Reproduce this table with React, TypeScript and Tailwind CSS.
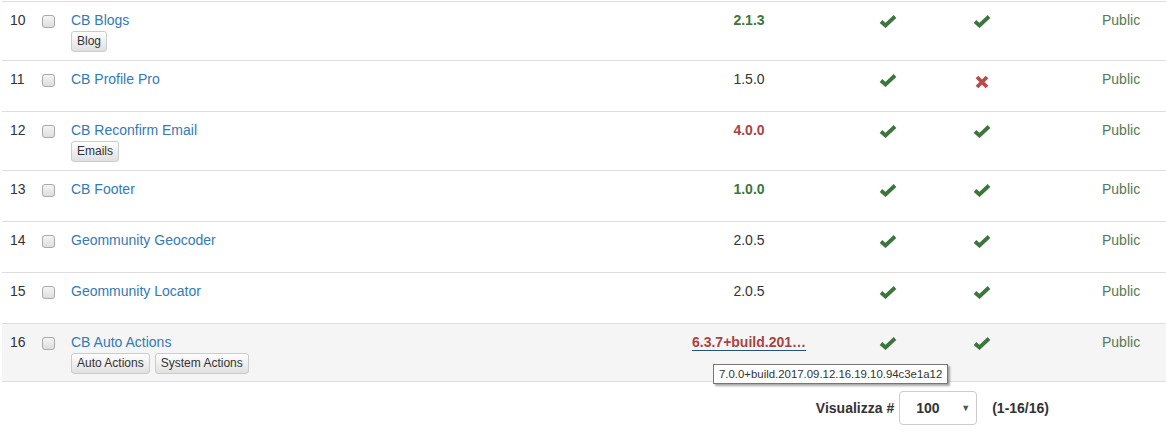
import React from "react";

type Row = {
  id: number;
  name: string;
  tags: string[];
  version: string;
  versionStyle: "plain" | "ok" | "old" | "link";
  a: boolean;
  b: boolean;
  hover?: boolean;
};

const rows: Row[] = [
  { id: 10, name: "CB Blogs", tags: ["Blog"], version: "2.1.3", versionStyle: "ok", a: true, b: true },
  { id: 11, name: "CB Profile Pro", tags: [], version: "1.5.0", versionStyle: "plain", a: true, b: false },
  { id: 12, name: "CB Reconfirm Email", tags: ["Emails"], version: "4.0.0", versionStyle: "old", a: true, b: true },
  { id: 13, name: "CB Footer", tags: [], version: "1.0.0", versionStyle: "ok", a: true, b: true },
  { id: 14, name: "Geommunity Geocoder", tags: [], version: "2.0.5", versionStyle: "plain", a: true, b: true },
  { id: 15, name: "Geommunity Locator", tags: [], version: "2.0.5", versionStyle: "plain", a: true, b: true },
  {
    id: 16,
    name: "CB Auto Actions",
    tags: ["Auto Actions", "System Actions"],
    version: "6.3.7+build.201…",
    versionStyle: "link",
    a: true,
    b: true,
    hover: true,
  },
];

function Check() {
  return (
    <svg width="18" height="14" viewBox="0 0 18 14">
      <path d="M2 7.5 L6.5 11.5 L16 2.5" fill="none" stroke="#3c763d" strokeWidth="3.8" />
    </svg>
  );
}

function Cross() {
  return (
    <svg width="14" height="14" viewBox="0 0 14 14">
      <path d="M2 2 L12 12 M12 2 L2 12" fill="none" stroke="#b94a48" strokeWidth="3.8" />
    </svg>
  );
}

function Version({ row }: { row: Row }) {
  if (row.versionStyle === "ok") return <span className="font-bold text-[#3c763d]">{row.version}</span>;
  if (row.versionStyle === "old") return <span className="font-bold text-[#a94442]">{row.version}</span>;
  if (row.versionStyle === "link")
    return (
      <span className="font-bold text-[#a94442] underline decoration-[#23527c] underline-offset-[3px]">
        {row.version}
      </span>
    );
  return <span>{row.version}</span>;
}

export default function App() {
  return (
    <div
      className="relative w-[1166px] h-[432px] bg-white text-[14px] leading-5 text-[#333]"
      style={{ fontFamily: '"Liberation Sans", Arial, sans-serif' }}
    >
      <div className="pt-px ml-[2px]">
        {rows.map((row) => (
          <div
            key={row.id}
            className={`grid grid-cols-[32px_29px_607px_158px_120px_68px_1fr] border-t border-[#ddd] ${
              row.tags.length ? "h-[59px]" : "h-[51px]"
            } ${row.hover ? "bg-[#f5f5f5] border-b" : ""}`}
          >
            <div className="pl-2 pt-2">{row.id}</div>
            <div className="pl-2 pt-[13px]">
              <div className="w-[13px] h-[13px] rounded-[3px] border border-[#a9a9a9] bg-gradient-to-b from-[#f4f4f4] to-[#dedede]" />
            </div>
            <div className="pl-2 pt-2">
              <div className="text-[#337ab7]">{row.name}</div>
              {row.tags.length > 0 && (
                <div className="flex gap-[5px] mt-px">
                  {row.tags.map((t) => (
                    <span
                      key={t}
                      className="px-[5px] h-[21px] leading-[19px] text-[12px] text-[#333] border border-[#ccc] rounded-[3px] bg-gradient-to-b from-white to-[#e0e0e0]"
                    >
                      {t}
                    </span>
                  ))}
                </div>
              )}
            </div>
            <div className="pt-2 text-center">
              <Version row={row} />
            </div>
            <div className="pt-[12px] flex justify-center">{row.a ? <Check /> : <Cross />}</div>
            <div className="pt-[12px] flex justify-center">
              {row.b ? <Check /> : <span className="pt-[2px]"><Cross /></span>}
            </div>
            <div className="pt-2 pl-[86px] text-[#557a55]">Public</div>
          </div>
        ))}
      </div>

      <div className="flex justify-end items-center pr-[117px] mt-[9px]">
        <span className="font-bold">Visualizza #</span>
        <div className="ml-[5px] w-[78px] h-[34px] border border-[#ccc] rounded-[4px] flex items-center justify-between pl-[16px] pr-[6px] bg-white">
          <span className="font-bold text-[#333]">100</span>
          <span className="text-[9px] text-[#555]">▼</span>
        </div>
        <span className="ml-[15px] font-bold">(1-16/16)</span>
      </div>

      {/* native title tooltip */}
      <div className="absolute left-[713px] top-[364px] h-[20px] px-[5px] border border-[#767676] bg-white text-[11.4px] leading-[18px] text-[#333] shadow-[2px_2px_2px_rgba(0,0,0,0.35)]">
        7.0.0+build.2017.09.12.16.19.10.94c3e1a12
      </div>
    </div>
  );
}
